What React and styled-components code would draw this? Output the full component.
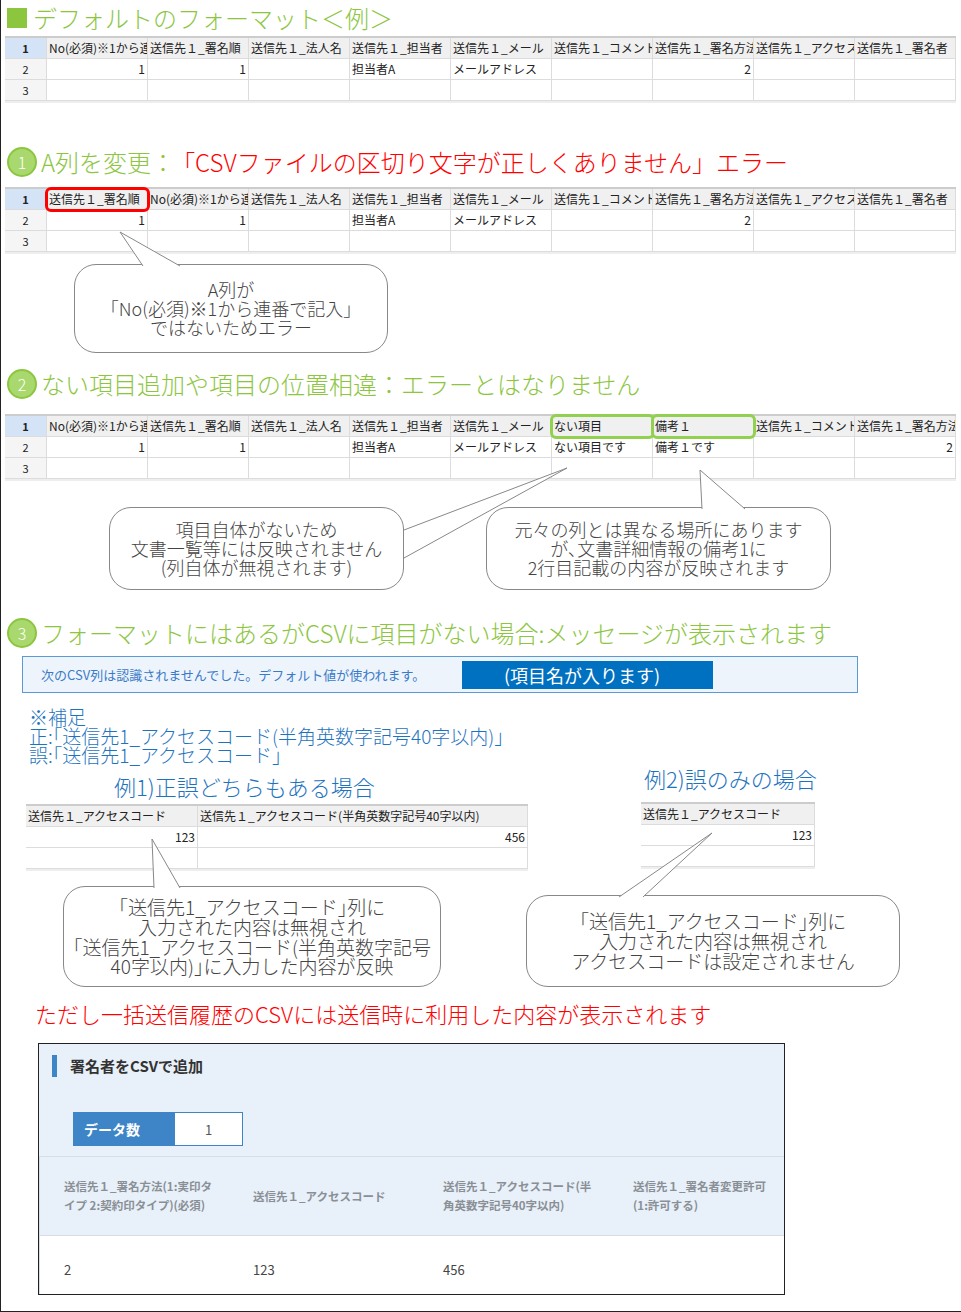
import React from 'react';
import styled, { createGlobalStyle } from 'styled-components';

const Global = createGlobalStyle`
  body { margin: 0; background: #fff; font-family: "Noto Sans CJK JP", "Noto Sans", sans-serif; }
`;

const Page = styled.div`
  width: 961px;
  height: 1312px;
  box-sizing: border-box;
  border: 1px solid #222;
  border-top: none;
  border-right: none;
  overflow: hidden;
  position: relative;
`;

const Heading = styled.div`
  display: flex;
  align-items: center;
  gap: 4px;
  font-size: 24px;
  font-weight: 300;
  color: #8cc63f;
  margin: ${p => p.$m || '0'};
  padding-left: 6px;
  white-space: nowrap;
  line-height: 34px;
`;

const Square = styled.span`
  width: 20px;
  height: 20px;
  background: #8cc63f;
  display: inline-block;
  margin-right: 2px;
`;

const Num = styled.span`
  width: 30px;
  height: 30px;
  border-radius: 50%;
  background: #a9d86e;
  border: 2px solid #8cc63f;
  box-sizing: border-box;
  color: #fff;
  font-size: 16px;
  display: inline-flex;
  align-items: center;
  justify-content: center;
`;

const Red = styled.span`
  color: #ff0000;
  margin-left: -8px;
`;

const SheetGrid = styled.div`
  display: grid;
  grid-template-columns: ${p => p.$cols};
  margin: ${p => p.$m || '0 0 0 4px'};
  width: max-content;
  border-top: 2px solid #ccc;
  font-size: 12px;
  color: #222;
  box-shadow: 0 2px 0 #eee;
`;

const Cell = styled.div`
  height: 20px;
  line-height: 20px;
  padding: 0 2px;
  border-right: 1px solid #dcdcdc;
  border-bottom: 1px solid #dcdcdc;
  white-space: nowrap;
  overflow: hidden;
  text-overflow: clip;
  text-align: ${p => (p.$right ? 'right' : 'left')};
  background: ${p => (p.$head ? '#f0f0f0' : '#fff')};
  position: relative;
  ${p => p.$mark && `outline: 3px solid ${p.$mark}; outline-offset: -1px; border-radius: 4px; z-index: 1;`}
`;

const RowNum = styled(Cell)`
  text-align: center;
  font-size: 11px;
  background: ${p => (p.$sel ? '#d5e3f6' : '#f5f5f5')};
  font-weight: ${p => (p.$sel ? 700 : 400)};
`;

function Sheet({ cols, rows, marks = {}, m, rowNums = true }) {
  const tmpl = (rowNums ? '42px ' : '') + cols.map(c => c + 'px').join(' ');
  return (
    <SheetGrid $cols={tmpl} $m={m}>
      {rows.map((r, ri) => (
        <React.Fragment key={ri}>
          {rowNums && <RowNum $sel={ri === 0}>{ri + 1}</RowNum>}
          {cols.map((_, ci) => {
            const v = r[ci] ?? '';
            const right = ri > 0 && /^\d+$/.test(v);
            return (
              <Cell key={ci} $head={ri === 0} $right={right} $mark={ri === 0 ? marks[ci] : undefined}>
                {v}
              </Cell>
            );
          })}
        </React.Fragment>
      ))}
    </SheetGrid>
  );
}

const H = '送信先１_';
const W9 = [101, 101, 101, 101, 101, 101, 101, 101, 101];

const Callout = styled.div`
  position: relative;
  width: ${p => p.$w}px;
  height: ${p => p.$h}px;
  margin: ${p => p.$m};
  box-sizing: border-box;
  border: 1px solid #888;
  border-radius: 22px;
  background: #fff;
  display: flex;
  align-items: center;
  justify-content: center;
  text-align: center;
  font-size: ${p => p.$fs || 18}px;
  line-height: 1.05;
  color: #444;
  font-weight: 300;
`;

const Tail = styled.svg`
  position: absolute;
  left: 0;
  top: 0;
  overflow: visible;
  pointer-events: none;
`;

function Bubble({ w, h, m, tip, base, fs, children }) {
  const [a, b] = base;
  const pts = `${a[0]},${a[1]} ${tip[0]},${tip[1]} ${b[0]},${b[1]}`;
  return (
    <Callout $w={w} $h={h} $m={m} $fs={fs}>
      <Tail width="1" height="1">
        <polygon points={pts} fill="#fff" />
        <polyline points={pts} fill="none" stroke="#888" strokeWidth="1" />
      </Tail>
      <div>{children}</div>
    </Callout>
  );
}

const Row = styled.div`
  display: flex;
  align-items: flex-start;
  margin: ${p => p.$m || '0'};
`;

const MsgBar = styled.div`
  margin: 6px 0 0 21px;
  width: 836px;
  height: 37px;
  box-sizing: border-box;
  border: 1px solid #5b9bd5;
  background: #eef4fc;
  display: flex;
  align-items: center;
  padding-left: 18px;
  font-size: 13px;
  color: #3a7bc8;
`;

const MsgText = styled.span`
  width: 421px;
  white-space: nowrap;
`;

const MsgTag = styled.span`
  width: 251px;
  height: 28px;
  background: #0070c0;
  color: #fff;
  font-size: 18px;
  display: flex;
  align-items: center;
  padding-left: 42px;
  box-sizing: border-box;
`;

const Note = styled.div`
  margin: 14px 0 0 28px;
  color: #1e73be;
  font-size: 19px;
  line-height: 19px;
  font-weight: 300;
`;

const ExTitle = styled.div`
  color: #1e73be;
  font-size: 22px;
  font-weight: 300;
  margin: ${p => p.$m};
  line-height: 28px;
`;

const Col = styled.div`
  display: flex;
  flex-direction: column;
`;

const Warn = styled.div`
  color: #ff0000;
  font-size: 22px;
  font-weight: 300;
  margin: 12px 0 0 34px;
  line-height: 28px;
`;

const Panel = styled.div`
  margin: 16px 0 0 37px;
  width: 747px;
  height: 252px;
  box-sizing: border-box;
  border: 1px solid #222;
  background: #e8f1f9;
  overflow: hidden;
`;

const PanelTitle = styled.div`
  margin: 11px 0 0 13px;
  border-left: 5px solid #3d85c6;
  padding-left: 13px;
  height: 22px;
  line-height: 22px;
  font-size: 15px;
  font-weight: 700;
  color: #333;
`;

const CountBox = styled.div`
  display: flex;
  margin: 35px 0 0 34px;
  width: 170px;
  height: 34px;
  border: 1px solid #3d85c6;
  box-sizing: border-box;
`;

const CountLabel = styled.div`
  width: 101px;
  background: #3d85c6;
  color: #fff;
  font-weight: 700;
  font-size: 14px;
  display: flex;
  align-items: center;
  padding-left: 10px;
  box-sizing: border-box;
`;

const CountVal = styled.div`
  flex: 1;
  background: #fff;
  color: #555;
  font-size: 13px;
  display: flex;
  align-items: center;
  padding-left: 30px;
`;

const TGrid = styled.div`
  margin-top: 10px;
  display: grid;
  grid-template-columns: 190px 190px 190px 176px;
  border-top: 1px solid #d5dde6;
`;

const TH = styled.div`
  height: 78px;
  display: flex;
  align-items: center;
  padding: 0 10px 0 24px;
  font-size: 11.5px;
  font-weight: 700;
  color: #8a8f96;
  line-height: 19px;
  border-bottom: 1px solid #d5dde6;
  border-left: ${p => (p.$first ? '1px solid #d5dde6' : 'none')};
`;

const TD = styled.div`
  height: 66px;
  background: #fff;
  display: flex;
  align-items: center;
  padding: 0 24px;
  font-size: 13px;
  color: #444;
  border-left: ${p => (p.$first ? '1px solid #d5dde6' : 'none')};
`;

export default function App() {
  const row3 = Array(9).fill('');
  return (
    <Page>
      <Global />
      <Heading $m="1px 0 0 0"><Square />デフォルトのフォーマット＜例＞</Heading>
      <Sheet
        m="1px 0 0 4px"
        cols={W9}
        rows={[
          ['No(必須)※1から連番で記入', H + '署名順', H + '法人名', H + '担当者', H + 'メール', H + 'コメント', H + '署名方法', H + 'アクセス', H + '署名者'],
          ['1', '1', '', '担当者A', 'メールアドレス', '', '2', '', ''],
          row3,
        ]}
      />

      <Heading $m="44px 0 0 0"><Num>1</Num>A列を変更：<Red>「CSVファイルの区切り文字が正しくありません」エラー</Red></Heading>
      <Sheet
        m="8px 0 0 4px"
        cols={W9}
        marks={{ 0: '#ff0000' }}
        rows={[
          [H + '署名順', 'No(必須)※1から連番で記入', H + '法人名', H + '担当者', H + 'メール', H + 'コメント', H + '署名方法', H + 'アクセス', H + '署名者'],
          ['1', '1', '', '担当者A', 'メールアドレス', '', '2', '', ''],
          row3,
        ]}
      />
      <Bubble w={314} h={89} m="12px 0 0 73px" fs={18} tip={[45, -33]} base={[[68, 1], [105, 1]]}>
        A列が<br />「No(必須)※1から連番で記入」<br />ではないためエラー
      </Bubble>

      <Heading $m="14px 0 0 0"><Num>2</Num>ない項目追加や項目の位置相違：エラーとはなりません</Heading>
      <Sheet
        m="13px 0 0 4px"
        cols={W9}
        marks={{ 5: '#92d050', 6: '#92d050' }}
        rows={[
          ['No(必須)※1から連番で記入', H + '署名順', H + '法人名', H + '担当者', H + 'メール', 'ない項目', '備考１', H + 'コメント', H + '署名方法'],
          ['1', '1', '', '担当者A', 'メールアドレス', 'ない項目です', '備考１です', '', '2'],
          row3,
        ]}
      />
      <Row $m="28px 0 0 108px">
        <Bubble w={295} h={83} m="0" tip={[457, -40]} base={[[294, 22], [294, 50]]}>
          項目自体がないため<br />文書一覧等には反映されません<br />(列自体が無視されます)
        </Bubble>
        <Bubble w={345} h={83} m="0 0 0 82px" tip={[213, -38]} base={[[215, 1], [258, 1]]}>
          元々の列とは異なる場所にあります<br />が､文書詳細情報の備考1に<br />2行目記載の内容が反映されます
        </Bubble>
      </Row>

      <Heading $m="26px 0 0 0"><Num>3</Num>フォーマットにはあるがCSVに項目がない場合:メッセージが表示されます</Heading>
      <MsgBar>
        <MsgText>次のCSV列は認識されませんでした。デフォルト値が使われます。</MsgText>
        <MsgTag>(項目名が入ります)</MsgTag>
      </MsgBar>

      <Note>
        ※補足<br />正:｢送信先1_アクセスコード(半角英数字記号40字以内)｣<br />誤:｢送信先1_アクセスコード｣
      </Note>

      <Row $m="0 0 0 25px">
        <Col>
          <ExTitle $m="8px 0 0 88px">例1)正誤どちらもある場合</ExTitle>
          <Sheet
            m="4px 0 0 0"
            rowNums={false}
            cols={[172, 330]}
            rows={[[' 送信先１_アクセスコード', ' 送信先１_アクセスコード(半角英数字記号40字以内)'], ['123', '456'], ['', '']]}
          />
        </Col>
        <Col>
          <ExTitle $m="0 0 0 116px">例2)誤のみの場合</ExTitle>
          <Sheet
            m="10px 0 0 113px"
            rowNums={false}
            cols={[174]}
            rows={[[' 送信先１_アクセスコード'], ['123'], ['']]}
          />
        </Col>
      </Row>

      <Row $m="17px 0 0 62px">
        <Bubble w={378} h={101} m="0" fs={19} tip={[88, -48]} base={[[90, 1], [116, 1]]}>
          ｢送信先1_アクセスコード｣列に<br />入力された内容は無視され<br />｢送信先1_アクセスコード(半角英数字記号<br />40字以内)｣に入力した内容が反映
        </Bubble>
        <Bubble w={374} h={92} m="9px 0 0 85px" fs={19} tip={[185, -63]} base={[[92, 1], [116, 1]]}>
          ｢送信先1_アクセスコード｣列に<br />入力された内容は無視され<br />アクセスコードは設定されません
        </Bubble>
      </Row>

      <Warn>ただし一括送信履歴のCSVには送信時に利用した内容が表示されます</Warn>

      <Panel>
        <PanelTitle>署名者をCSVで追加</PanelTitle>
        <CountBox>
          <CountLabel>データ数</CountLabel>
          <CountVal>1</CountVal>
        </CountBox>
        <TGrid>
          <TH $first>送信先１_署名方法(1:実印タイプ 2:契約印タイプ)(必須)</TH>
          <TH>送信先１_アクセスコード</TH>
          <TH>送信先１_アクセスコード(半角英数字記号40字以内)</TH>
          <TH>送信先１_署名者変更許可(1:許可する)</TH>
          <TD $first>2</TD>
          <TD>123</TD>
          <TD>456</TD>
          <TD />
        </TGrid>
      </Panel>
    </Page>
  );
}
